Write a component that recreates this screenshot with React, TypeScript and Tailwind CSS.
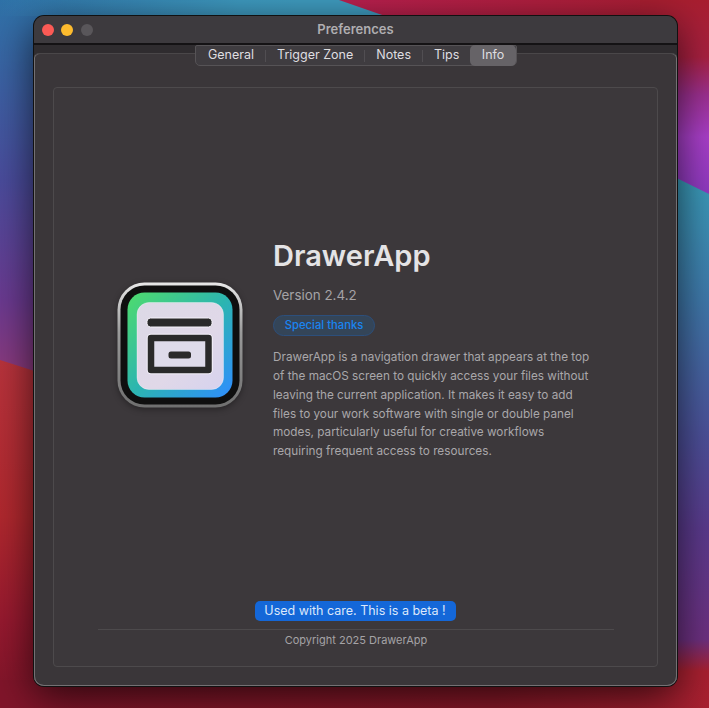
const FONT = "font-['Inter','Liberation_Sans',sans-serif]";

function Wallpaper() {
  return (
    <svg className="absolute inset-0" width="709" height="708" viewBox="0 0 709 708">
      <defs>
        <linearGradient id="blue" gradientUnits="userSpaceOnUse" x1="0" y1="0" x2="0" y2="375">
          <stop offset="0" stopColor="#2f72a8" />
          <stop offset="0.48" stopColor="#4a4c9c" />
          <stop offset="0.8" stopColor="#6a3a90" />
          <stop offset="1" stopColor="#8c3a7c" />
        </linearGradient>
        <linearGradient id="top" gradientUnits="userSpaceOnUse" x1="0" y1="0" x2="300" y2="0">
          <stop offset="0" stopColor="#3e9ac0" stopOpacity="0" />
          <stop offset="0.8" stopColor="#3e9ac0" />
          <stop offset="1" stopColor="#3f9cc0" />
        </linearGradient>
        <linearGradient id="crimson" x1="0" y1="0" x2="1" y2="0">
          <stop offset="0" stopColor="#bb2050" />
          <stop offset="1" stopColor="#a81e30" />
        </linearGradient>
        <linearGradient id="red" gradientUnits="userSpaceOnUse" x1="0" y1="360" x2="0" y2="708">
          <stop offset="0" stopColor="#b8333c" />
          <stop offset="0.45" stopColor="#b0282e" />
          <stop offset="0.75" stopColor="#96192f" />
          <stop offset="1" stopColor="#7c1428" />
        </linearGradient>
        <linearGradient id="right" gradientUnits="userSpaceOnUse" x1="0" y1="0" x2="0" y2="190">
          <stop offset="0" stopColor="#a81e30" />
          <stop offset="0.3" stopColor="#a82040" />
          <stop offset="0.5" stopColor="#9c3090" />
          <stop offset="0.72" stopColor="#a83fc8" />
          <stop offset="1" stopColor="#8f3ac0" />
        </linearGradient>
        <linearGradient id="rightLow" gradientUnits="userSpaceOnUse" x1="0" y1="180" x2="0" y2="708">
          <stop offset="0" stopColor="#3a9ab8" />
          <stop offset="0.23" stopColor="#3f78aa" />
          <stop offset="0.49" stopColor="#4c4f98" />
          <stop offset="0.66" stopColor="#5a3a8c" />
          <stop offset="0.87" stopColor="#6c3080" />
          <stop offset="0.93" stopColor="#a82030" />
          <stop offset="1" stopColor="#a82030" />
        </linearGradient>
        <linearGradient id="floor" gradientUnits="userSpaceOnUse" x1="0" y1="0" x2="709" y2="0">
          <stop offset="0" stopColor="#80152a" />
          <stop offset="0.7" stopColor="#8a1828" />
          <stop offset="1" stopColor="#a82030" />
        </linearGradient>
      </defs>
      <rect width="709" height="708" fill="#8a1828" />
      <rect width="709" height="380" fill="url(#blue)" />
      <rect width="460" height="16" fill="url(#top)" />
      <polygon points="339,0 709,0 709,40 450,40 385,16" fill="url(#crimson)" />
      <polygon points="0,360 200,424 200,708 0,708" fill="url(#red)" />
      <rect x="640" y="0" width="69" height="200" fill="url(#right)" />
      <polygon points="640,160 709,194 709,708 640,708" fill="url(#rightLow)" />
      <rect x="0" y="680" width="709" height="28" fill="url(#floor)" />
    </svg>
  );
}

function AppIcon() {
  return (
    <svg width="126" height="126" viewBox="0 0 126 126" className="shrink-0 drop-shadow-[0_2px_3px_rgba(0,0,0,0.35)]">
      <defs>
        <linearGradient id="ring" x1="0" y1="0" x2="0" y2="1">
          <stop offset="0" stopColor="#e8e8e8" />
          <stop offset="0.4" stopColor="#9a9a9a" />
          <stop offset="1" stopColor="#6f6f6f" />
        </linearGradient>
        <linearGradient id="glow" x1="0" y1="0" x2="1" y2="1">
          <stop offset="0" stopColor="#4fdc6c" />
          <stop offset="0.5" stopColor="#2cb5b0" />
          <stop offset="1" stopColor="#2f8dff" />
        </linearGradient>
        <linearGradient id="face" x1="0" y1="0" x2="1" y2="1">
          <stop offset="0" stopColor="#dcd9e6" />
          <stop offset="0.6" stopColor="#e0d8e8" />
          <stop offset="1" stopColor="#d6d2ee" />
        </linearGradient>
      </defs>
      <rect x="0.5" y="0.5" width="125" height="125" rx="27" fill="url(#ring)" />
      <rect x="3.5" y="3.5" width="119" height="119" rx="24" fill="#0f0f0f" />
      <rect x="10.5" y="10.5" width="105" height="105" rx="17" fill="url(#glow)" />
      <rect x="20" y="20.5" width="86.5" height="87" rx="12" fill="url(#face)" stroke="#ffffff" strokeOpacity="0.35" />
      <rect x="30" y="36" width="65" height="9" rx="3.5" fill="#2a2a2a" stroke="#f5f2fa" strokeWidth="1" />
      <rect x="34" y="56" width="57.5" height="32" fill="#f5f2fa" stroke="#f5f2fa" strokeWidth="8.5" strokeLinejoin="round" />
      <rect x="34" y="56" width="57.5" height="32" fill="#dedbea" stroke="#2a2a2a" strokeWidth="6.5" strokeLinejoin="round" />
      <rect x="51.5" y="69.5" width="22.5" height="7" rx="2.5" fill="#2a2a2a" />
    </svg>
  );
}

const tabs = ["General", "Trigger Zone", "Notes", "Tips"];

export default function App() {
  return (
    <div className={`relative h-[708px] w-[709px] overflow-hidden pl-[34px] pt-[16px] ${FONT}`}>
      <Wallpaper />
      <div className="relative flex h-[670px] w-[643px] flex-col rounded-[10px] bg-[#3a3639] shadow-[0_0_0_1px_#111,0_10px_40px_rgba(0,0,0,0.7)]">
        <div className="relative flex h-[29px] shrink-0 items-center justify-center rounded-t-[10px] border-b-2 border-[#141214] bg-[#3d3a3e]">
          <div className="absolute left-[7.5px] top-[8px] flex gap-[7.5px]">
            <span className="size-[12px] rounded-full bg-[#fb5a55]" />
            <span className="size-[12px] rounded-full bg-[#fdbb2e]" />
            <span className="size-[12px] rounded-full bg-[#59565a]" />
          </div>
          <span className="text-[13px] font-semibold text-[#b0aeb1]">Preferences</span>
        </div>

        <div className="flex flex-1 flex-col rounded-b-[10px] bg-[#2f2c2f] pt-[8px]">
          <div className="relative flex flex-1 flex-col rounded-b-[10px] rounded-t-[5px] border-t border-[#4a4749] bg-[#3a3639] px-[19px] pb-[19px] pt-[33px] shadow-[inset_0_-1px_0_#747174,inset_1px_0_0_#747174,inset_-1px_0_0_#747174]">
            <div className="absolute left-[161px] top-[-9px] flex h-[21px] items-center rounded-b-[5px] rounded-t-[2px] border border-[#565356] bg-[#3f3c40] pl-[1px] text-[12.5px] text-[#dfdee0]">
              {tabs.map((t, i) => (
                <span key={t} className={`flex h-[12px] items-center border-[#514e52] px-[11px] ${i < 3 ? "border-r" : ""}`}>
                  {t}
                </span>
              ))}
              <span className="flex h-[21px] w-[45.5px] items-center justify-center rounded-[5px] bg-[#666367] text-[#dfdee0]">Info</span>
            </div>

            <div className="flex flex-1 flex-col rounded-[4px] border border-[#4d4a4c] bg-[#3c383b]">
              <div className="flex flex-1 items-center gap-[30px] pl-[63px]">
                <AppIcon />
                <div className="flex w-[330px] flex-col items-start pt-[10px]">
                  <h1 className="text-[29px] font-semibold leading-[36px] text-[#e4e3e5]">DrawerApp</h1>
                  <p className="mt-[11px] text-[13.4px] leading-[20px] text-[#a5a3a6]">Version 2.4.2</p>
                  <span className="mt-[10px] flex h-[21px] w-[102px] items-center justify-center rounded-full border border-[#2c4f7c] bg-[#344558] text-[11.25px] font-medium text-[#1a84f0]">
                    Special thanks
                  </span>
                  <p className="mt-[12px] text-[11.75px] leading-[18.75px] text-[#a9a7aa]">
                    DrawerApp is a navigation drawer that appears at the top
                    <br />
                    of the macOS screen to quickly access your files without
                    <br />
                    leaving the current application. It makes it easy to add
                    <br />
                    files to your work software with single or double panel
                    <br />
                    modes, particularly useful for creative workflows
                    <br />
                    requiring frequent access to resources.
                  </p>
                </div>
              </div>

              <div className="flex flex-col items-center pb-[16px] pl-[44px] pr-[43px]">
                <span className="mr-[2px] flex h-[20px] w-[201px] items-center justify-center rounded-[5px] bg-[#1467d8] text-[12.5px] text-[#dce8fb]">
                  Used with care. This is a beta !
                </span>
                <div className="mt-[8px] h-px w-full bg-[#4d4a4c]" />
                <p className="text-[11px] leading-[20px] text-[#a5a3a6]">Copyright 2025 DrawerApp</p>
              </div>
            </div>
          </div>
        </div>
      </div>
    </div>
  );
}
